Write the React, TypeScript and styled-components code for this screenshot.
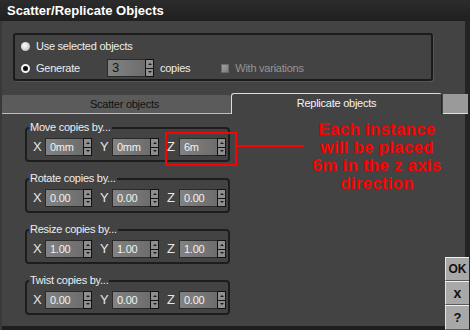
import React from 'react';
import styled, { createGlobalStyle } from 'styled-components';

const Global = createGlobalStyle`
  html, body { margin: 0; padding: 0; background: #434343; }
  body { font-family: "Liberation Sans", Arial, sans-serif; }
  * { box-sizing: border-box; }
`;

const Window = styled.div`
  position: relative;
  width: 470px;
  height: 330px;
  overflow: hidden;
  background: #434343;
  box-shadow: inset 2px 0 0 #393939, inset -5px 0 0 #242424, inset 0 -4px 0 #1e1e1e;
  display: flex;
  flex-direction: column;
  font-size: 11px;
  letter-spacing: -0.25px;
  color: #ececec;
`;

const TitleBar = styled.div`
  height: 21px;
  flex: none;
  background: linear-gradient(#2c2c2c, #1f1f1f);
  color: #fff;
  font-weight: bold;
  font-size: 13px;
  letter-spacing: 0;
  line-height: 22px;
  padding-left: 7px;
`;

const TopSection = styled.div`
  padding: 12px 0 0 13px;
  flex: none;
`;

const OptionsBox = styled.div`
  width: 420px;
  height: 48px;
  border: 2px solid #1b1b1b;
  border-radius: 3px;
  box-shadow: 1px 1px 0 #555;
  padding: 4px 0 2px 6px;
  display: flex;
  flex-direction: column;
  gap: 6px;
`;

const OptRow = styled.div<{ $h: number }>`
  height: ${p => p.$h}px;
  display: flex;
  align-items: center;
`;

const Radio = styled.span<{ $on?: boolean }>`
  width: 9px;
  height: 9px;
  border-radius: 50%;
  flex: none;
  margin-right: 6px;
  ${p =>
    p.$on
      ? 'background: #0c0c0c; border: 2px solid #f4f4f4;'
      : 'background: radial-gradient(circle at 40% 40%, #ffffff, #d0d0d0 60%, #8a8a8a);'}
`;

const OptLabel = styled.span<{ $w?: number }>`
  color: #ededed;
  ${p => (p.$w ? `width: ${p.$w}px;` : '')}
`;

const FieldWrap = styled.div`
  display: flex;
  height: 18px;
`;

const Field = styled.div<{ $w: number; $dark?: boolean; $big?: boolean }>`
  width: ${p => p.$w}px;
  height: 18px;
  background: linear-gradient(90deg, #828282, #6d6d6d);
  border: 1px solid #2a2a2a;
  border-right: none;
  color: ${p => (p.$dark ? '#151515' : '#f2f2f2')};
  font-size: ${p => (p.$big ? 13 : 11)}px;
  line-height: 16px;
  padding-left: 4px;
`;

const Spin = styled.div`
  width: 9px;
  height: 18px;
  background: #121212;
  display: flex;
  flex-direction: column;
  gap: 1px;
  padding: 1px 1px;
`;

const SpinBtn = styled.div<{ $down?: boolean }>`
  flex: 1;
  background: #8f8f8f;
  display: flex;
  align-items: center;
  justify-content: center;
  &::after {
    content: '';
    width: 0;
    height: 0;
    border-left: 2px solid transparent;
    border-right: 2px solid transparent;
    ${p => (p.$down ? 'border-top: 2px solid #1c1c1c;' : 'border-bottom: 2px solid #1c1c1c;')}
  }
`;

const CopiesText = styled.span`
  margin-left: 6px;
  color: #ededed;
`;

const Check = styled.span`
  width: 8px;
  height: 9px;
  margin-left: 31px;
  background: linear-gradient(135deg, #a0a0a0, #7e7e7e);
  border: 1px solid #6a6a6a;
`;

const DisabledText = styled.span`
  margin-left: 6px;
  color: #959595;
`;

const TabRow = styled.div`
  margin-top: 12px;
  height: 21px;
  flex: none;
  display: flex;
  align-items: flex-end;
  padding-left: 2px;
`;

const Tab = styled.div<{ $active?: boolean }>`
  text-align: center;
  font-size: 11px;
  ${p =>
    p.$active
      ? `
    width: 211px;
    height: 21px;
    border-top: 1px solid #dcdcdc;
    border-left: 1px solid #dcdcdc;
    border-right: 1px solid #262626;
    border-radius: 3px 3px 0 0;
    color: #f4f4f4;
    line-height: 19px;
  `
      : `
    width: 229px;
    height: 19px;
    background: #5b5b5b;
    border-bottom: 1px solid #bdbdbd;
    border-radius: 2px 3px 0 0;
    color: #111;
    line-height: 18px;
    padding-left: 16px;
  `}
`;

const TabFiller = styled.div`
  width: 25px;
  height: 20px;
  margin-left: 1px;
  background: #9a9a9a;
  border-bottom: 1px solid #dedede;
`;

const Main = styled.div`
  flex: 1;
  display: flex;
  min-height: 0;
`;

const Groups = styled.div`
  flex: 1;
  padding: 7px 0 0 25px;
  display: flex;
  flex-direction: column;
  gap: 10px;
`;

const Group = styled.fieldset`
  width: 205px;
  min-width: 0;
  margin: 0;
  border: 2px solid #1d1d1d;
  border-radius: 4px;
  padding: 4px 0 4px 6px;
  display: flex;
`;

const Legend = styled.legend`
  margin-left: -4px;
  padding: 0 1px;
  line-height: 13px;
  font-size: 11px;
  color: #eeeeee;
`;

const AxisItem = styled.div`
  display: flex;
  align-items: center;
  margin-right: 8px;
  &:last-child { margin-right: 0; }
`;

const Axis = styled.span`
  width: 8px;
  margin-right: 4px;
  font-size: 13px;
  letter-spacing: 0;
  color: #e6e6e6;
  line-height: 18px;
`;

const SideCol = styled.div`
  width: 24px;
  margin-right: 1px;
  display: flex;
  flex-direction: column;
  justify-content: flex-end;
`;

const SideBtn = styled.button<{ $h: number; $size?: number }>`
  height: ${p => p.$h}px;
  width: 24px;
  padding: 0;
  margin: 0;
  background: #a8a8a8;
  border: none;
  border-top: 1px solid #f0f0f0;
  border-left: 1px solid #e4e4e4;
  border-bottom: 1px solid #5a5a5a;
  font-family: "Liberation Sans", Arial, sans-serif;
  font-weight: bold;
  font-size: ${p => p.$size ?? 12}px;
  color: #111;
  line-height: 1;
`;

const Highlight = styled.div`
  position: absolute;
  left: 165px;
  top: 132px;
  width: 72px;
  height: 34px;
  border: 2px solid #ff0000;
`;

const Pointer = styled.div`
  position: absolute;
  left: 237px;
  top: 145px;
  width: 67px;
  height: 2px;
  background: #ff0000;
`;

const Note = styled.div`
  position: absolute;
  left: 300px;
  top: 121px;
  width: 154px;
  text-align: center;
  color: #ff0000;
  font-weight: bold;
  font-size: 17px;
  line-height: 18px;
  letter-spacing: 0.2px;
`;

type AxisVal = { axis: string; value: string };

const Spinner = () => (
  <Spin>
    <SpinBtn />
    <SpinBtn $down />
  </Spin>
);

const AxisRow = ({ items }: { items: AxisVal[] }) => (
  <>
    {items.map(it => (
      <AxisItem key={it.axis}>
        <Axis>{it.axis}</Axis>
        <FieldWrap>
          <Field $w={38}>{it.value}</Field>
          <Spinner />
        </FieldWrap>
      </AxisItem>
    ))}
  </>
);

const groups: { title: string; values: [string, string, string] }[] = [
  { title: 'Move copies by...', values: ['0mm', '0mm', '6m'] },
  { title: 'Rotate copies by...', values: ['0.00', '0.00', '0.00'] },
  { title: 'Resize copies by...', values: ['1.00', '1.00', '1.00'] },
  { title: 'Twist copies by...', values: ['0.00', '0.00', '0.00'] },
];

export default function App() {
  return (
    <>
      <Global />
      <Window>
        <TitleBar>Scatter/Replicate Objects</TitleBar>
        <TopSection>
          <OptionsBox>
            <OptRow $h={14}>
              <Radio />
              <OptLabel>Use selected objects</OptLabel>
            </OptRow>
            <OptRow $h={18}>
              <Radio $on />
              <OptLabel $w={71}>Generate</OptLabel>
              <FieldWrap>
                <Field $w={38} $dark $big>3</Field>
                <Spinner />
              </FieldWrap>
              <CopiesText>copies</CopiesText>
              <Check />
              <DisabledText>With variations</DisabledText>
            </OptRow>
          </OptionsBox>
        </TopSection>
        <TabRow>
          <Tab>Scatter objects</Tab>
          <Tab $active>Replicate objects</Tab>
          <TabFiller />
        </TabRow>
        <Main>
          <Groups>
            {groups.map(g => (
              <Group key={g.title}>
                <Legend>{g.title}</Legend>
                <AxisRow
                  items={[
                    { axis: 'X', value: g.values[0] },
                    { axis: 'Y', value: g.values[1] },
                    { axis: 'Z', value: g.values[2] },
                  ]}
                />
              </Group>
            ))}
          </Groups>
          <SideCol>
            <SideBtn $h={24}>OK</SideBtn>
            <SideBtn $h={24} $size={14}>x</SideBtn>
            <SideBtn $h={25} $size={13}>?</SideBtn>
          </SideCol>
        </Main>
        <Highlight />
        <Pointer />
        <Note>
          Each instance
          <br />
          will be placed
          <br />
          6m in the z axis
          <br />
          direction
        </Note>
      </Window>
    </>
  );
}
